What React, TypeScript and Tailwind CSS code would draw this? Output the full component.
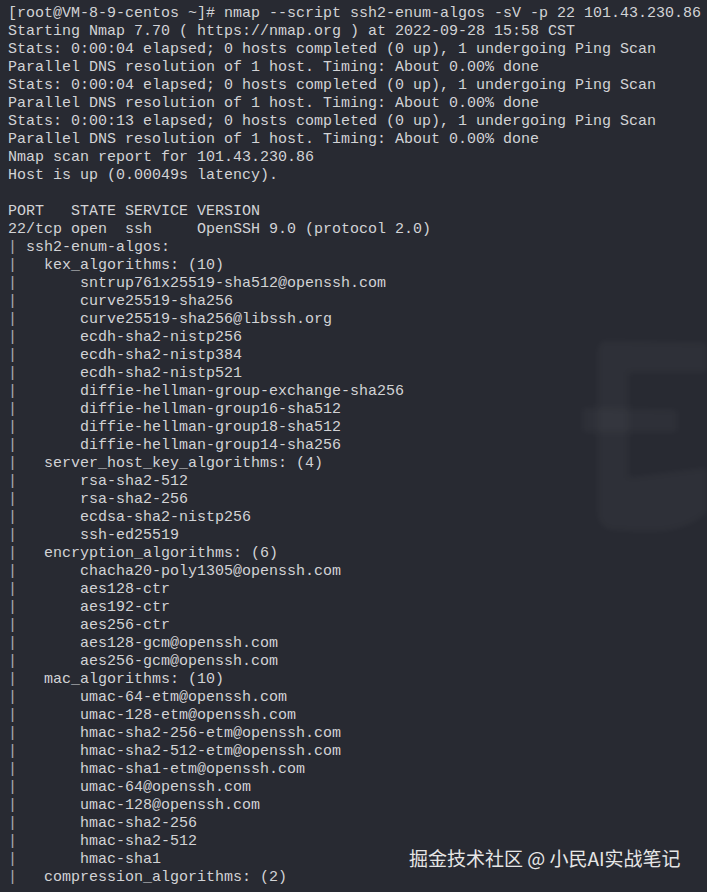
import React from "react";

const lines: string[] = [
  "[root@VM-8-9-centos ~]# nmap --script ssh2-enum-algos -sV -p 22 101.43.230.86",
  "Starting Nmap 7.70 ( https://nmap.org ) at 2022-09-28 15:58 CST",
  "Stats: 0:00:04 elapsed; 0 hosts completed (0 up), 1 undergoing Ping Scan",
  "Parallel DNS resolution of 1 host. Timing: About 0.00% done",
  "Stats: 0:00:04 elapsed; 0 hosts completed (0 up), 1 undergoing Ping Scan",
  "Parallel DNS resolution of 1 host. Timing: About 0.00% done",
  "Stats: 0:00:13 elapsed; 0 hosts completed (0 up), 1 undergoing Ping Scan",
  "Parallel DNS resolution of 1 host. Timing: About 0.00% done",
  "Nmap scan report for 101.43.230.86",
  "Host is up (0.00049s latency).",
  "",
  "PORT   STATE SERVICE VERSION",
  "22/tcp open  ssh     OpenSSH 9.0 (protocol 2.0)",
  "| ssh2-enum-algos:",
  "|   kex_algorithms: (10)",
  "|       sntrup761x25519-sha512@openssh.com",
  "|       curve25519-sha256",
  "|       curve25519-sha256@libssh.org",
  "|       ecdh-sha2-nistp256",
  "|       ecdh-sha2-nistp384",
  "|       ecdh-sha2-nistp521",
  "|       diffie-hellman-group-exchange-sha256",
  "|       diffie-hellman-group16-sha512",
  "|       diffie-hellman-group18-sha512",
  "|       diffie-hellman-group14-sha256",
  "|   server_host_key_algorithms: (4)",
  "|       rsa-sha2-512",
  "|       rsa-sha2-256",
  "|       ecdsa-sha2-nistp256",
  "|       ssh-ed25519",
  "|   encryption_algorithms: (6)",
  "|       chacha20-poly1305@openssh.com",
  "|       aes128-ctr",
  "|       aes192-ctr",
  "|       aes256-ctr",
  "|       aes128-gcm@openssh.com",
  "|       aes256-gcm@openssh.com",
  "|   mac_algorithms: (10)",
  "|       umac-64-etm@openssh.com",
  "|       umac-128-etm@openssh.com",
  "|       hmac-sha2-256-etm@openssh.com",
  "|       hmac-sha2-512-etm@openssh.com",
  "|       hmac-sha1-etm@openssh.com",
  "|       umac-64@openssh.com",
  "|       umac-128@openssh.com",
  "|       hmac-sha2-256",
  "|       hmac-sha2-512",
  "|       hmac-sha1",
  "|   compression_algorithms: (2)",
];

function Line({ text }: { text: string }) {
  const m = text.match(/^\|(.*)$/);
  if (m) {
    return (
      <div className="h-[18px] leading-[18px] whitespace-pre">
        <span className="text-[#a9abb0]">|</span>
        {m[1]}
      </div>
    );
  }
  return <div className="h-[18px] leading-[18px] whitespace-pre">{text || " "}</div>;
}

export default function App() {
  return (
    <div className="relative w-[707px] h-[892px] overflow-hidden bg-[#282a32]">
      <svg
        className="absolute left-0 top-0 pointer-events-none blur-[3px]"
        width="707"
        height="892"
        viewBox="0 0 707 892"
      >
        <g fill="#ffffff" fillOpacity="0.03">
          <path d="M606 341 L707 343 L707 372 L628 372 L628 530 L614 530 Q598 528 598 512 L598 352 Q598 341 606 341 Z" />
          <path d="M583 408 L677 410 L677 432 L583 432 Z" />
          <path d="M628 478 L707 468 L707 512 Q690 528 660 531 L628 531 Z" />
        </g>
      </svg>
      <div
        className="relative pl-2 pt-[5px] text-[15px] text-[#d2d3d6]"
        style={{ fontFamily: '"Liberation Mono", "Courier New", monospace' }}
      >
        {lines.map((l, i) => (
          <Line key={i} text={l} />
        ))}
      </div>
      <div
        className="absolute left-[409px] top-[846px] text-[19px] leading-[24px] text-[#e6e6e6] whitespace-pre"
        style={{ fontFamily: '"Noto Sans CJK SC", "Noto Sans", sans-serif' }}
      >
        掘金技术社区 @ 小民AI实战笔记
      </div>
    </div>
  );
}
